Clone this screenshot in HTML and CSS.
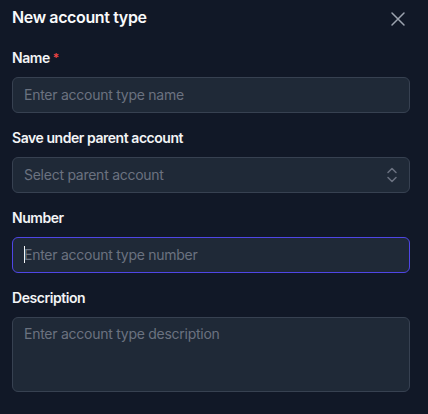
FILE: index.html
```html
<!DOCTYPE html>
<html lang="en">
<head>
    <meta charset="UTF-8">
    <meta name="viewport" content="width=device-width, initial-scale=1.0">
    <title>New account type</title>
    <link rel="stylesheet" href="styles.css">
</head>
<body>

    <div class="panel">
        <div class="panelHeader">
            <h2>New account type</h2>
            <button class="closeButton" type="button" aria-label="Close">
                <svg width="16" height="16" viewBox="0 0 16 16" fill="none" stroke="currentColor" stroke-width="1.5" stroke-linecap="round">
                    <path d="M2 2L14 14M14 2L2 14"/>
                </svg>
            </button>
        </div>

        <div class="field">
            <label for="name">Name <span class="required">*</span></label>
            <input id="name" type="text" placeholder="Enter account type name">
        </div>

        <div class="field">
            <label for="parent">Save under parent account</label>
            <div class="selectBox">
                <select id="parent">
                    <option>Select parent account</option>
                </select>
                <svg class="selectIcon" width="12" height="16" viewBox="0 0 12 16" fill="none" stroke="currentColor" stroke-width="1.5" stroke-linecap="round" stroke-linejoin="round">
                    <path d="M2 5.5L6 1.5L10 5.5"/>
                    <path d="M2 10.5L6 14.5L10 10.5"/>
                </svg>
            </div>
        </div>

        <div class="field">
            <label for="number">Number</label>
            <div class="inputWrap">
                <input id="number" class="isFocused" type="text" placeholder="Enter account type number">
                <span class="caret"></span>
            </div>
        </div>

        <div class="field">
            <label for="description">Description</label>
            <textarea id="description" placeholder="Enter account type description"></textarea>
        </div>
    </div>

</body>
</html>
```

FILE: styles.css
```css
body {
    margin: 0;
    font-family: Inter, "Noto Sans", sans-serif;
    background-color: #111827;
    color: #f3f4f6;
}

.panel {
    padding: 5px 18px 0 12px;
}

/* Cabeçalho */
.panelHeader {
    display: flex;
    justify-content: space-between;
    align-items: center;
    height: 24px;
    margin-bottom: 19px;
}

.panelHeader h2 {
    margin: 0;
    font-size: 16px;
    font-weight: 600;
    line-height: 24px;
    letter-spacing: -0.37px;
    color: #f9fafb;
}

.closeButton {
    background: none;
    border: none;
    padding: 0;
    margin: 4px 4px 0 0;
    color: #9ca3af;
    display: flex;
    cursor: pointer;
}

/* Campos */
.field {
    margin-bottom: 15px;
}

.field label {
    display: block;
    font-size: 14px;
    font-weight: 600;
    line-height: 20px;
    letter-spacing: -0.45px;
    color: #f3f4f6;
    margin-bottom: 9px;
}

.required {
    color: #ef4444;
    font-size: 12px;
    vertical-align: top;
}

input,
select,
textarea {
    box-sizing: border-box;
    width: 100%;
    height: 36px;
    background-color: #1f2937;
    border: 1px solid #374151;
    border-radius: 6px;
    color: #f3f4f6;
    font-family: inherit;
    font-size: 14px;
    letter-spacing: -0.26px;
    padding: 0 11px 2px;
    outline: none;
}

::placeholder {
    color: #6b7280;
}

select {
    appearance: none;
    color: #6b7280;
}

.selectBox,
.inputWrap {
    position: relative;
}

.selectIcon {
    position: absolute;
    right: 12px;
    top: 10px;
    color: #6b7280;
    pointer-events: none;
}

input.isFocused {
    border-color: #4f46e5;
}

.caret {
    position: absolute;
    left: 12px;
    top: 9px;
    width: 1px;
    height: 17px;
    background-color: #f3f4f6;
}

textarea {
    height: 75px;
    padding-top: 7px;
    resize: none;
    display: block;
}
```
